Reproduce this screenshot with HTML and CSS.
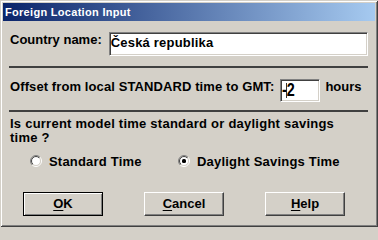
FILE: index.html
```html
<!DOCTYPE html>
<html lang="en">
<head>
<meta charset="utf-8">
<title>Foreign Location Input</title>
<link rel="stylesheet" href="styles.css">
</head>
<body>
<div class="window">
  <div class="titlebar">Foreign Location Input</div>
  <div class="content">
    <div class="row row-country">
      <span class="label">Country name:</span>
      <div class="field field-wide">Česká republika</div>
    </div>
    <div class="sep sep-1"></div>
    <div class="row row-offset">
      <span class="label label-offset">Offset from local STANDARD time to GMT:</span>
      <div class="field field-small"><span class="value">-<span class="caret"></span>2</span></div>
      <span class="unit">hours</span>
    </div>
    <div class="sep sep-2"></div>
    <p class="question">Is current model time standard or daylight savings<br>time ?</p>
    <div class="radios">
      <div class="radio">
        <svg class="radio-icon" width="12" height="12" viewBox="0 0 12 12">
          <defs>
            <linearGradient id="ro1" x1="0" y1="0" x2="1" y2="1"><stop offset="0.5" stop-color="#808080"/><stop offset="0.5" stop-color="#ffffff"/></linearGradient>
            <linearGradient id="ri1" x1="0" y1="0" x2="1" y2="1"><stop offset="0.5" stop-color="#404040"/><stop offset="0.5" stop-color="#d4d0c8"/></linearGradient>
          </defs>
          <circle cx="6" cy="6" r="5.5" fill="none" stroke="url(#ro1)" stroke-width="1"/>
          <circle cx="6" cy="6" r="4.5" fill="#fff" stroke="url(#ri1)" stroke-width="1"/>
        </svg>
        <span>Standard Time</span>
      </div>
      <div class="radio">
        <svg class="radio-icon" width="12" height="12" viewBox="0 0 12 12">
          <defs>
            <linearGradient id="ro2" x1="0" y1="0" x2="1" y2="1"><stop offset="0.5" stop-color="#808080"/><stop offset="0.5" stop-color="#ffffff"/></linearGradient>
            <linearGradient id="ri2" x1="0" y1="0" x2="1" y2="1"><stop offset="0.5" stop-color="#404040"/><stop offset="0.5" stop-color="#d4d0c8"/></linearGradient>
          </defs>
          <circle cx="6" cy="6" r="5.5" fill="none" stroke="url(#ro2)" stroke-width="1"/>
          <circle cx="6" cy="6" r="4.5" fill="#fff" stroke="url(#ri2)" stroke-width="1"/>
          <rect x="4" y="4" width="4" height="4" rx="1.5" fill="#000"/>
        </svg>
        <span>Daylight Savings Time</span>
      </div>
    </div>
    <div class="buttons">
      <button class="btn btn-default" type="button"><u>O</u>K</button>
      <button class="btn" type="button"><u>C</u>ancel</button>
      <button class="btn" type="button"><u>H</u>elp</button>
    </div>
  </div>
</div>
</body>
</html>
```

FILE: styles.css
```css
* {
  box-sizing: border-box;
}

html,
body {
  margin: 0;
  padding: 0;
  background: #d4d0c8;
}

body {
  width: 378px;
  height: 227px;
  overflow: hidden;
  font-family: "Liberation Sans", Arial, sans-serif;
  font-size: 13px;
  font-weight: bold;
  color: #000;
}

.window {
  width: 378px;
  height: 227px;
  padding: 3px;
  background: #d4d0c8;
  box-shadow:
    inset 1px 1px 0 #d4d0c8,
    inset -1px -1px 0 #404040,
    inset 2px 2px 0 #ffffff,
    inset -2px -2px 0 #808080;
  display: flex;
  flex-direction: column;
}

.titlebar {
  height: 18px;
  flex: none;
  background: linear-gradient(to right, #0a246a, #a6caf0);
  color: #fff;
  font-size: 11px;
  line-height: 18px;
  padding-left: 2px;
  letter-spacing: 0.3px;
  white-space: nowrap;
}

.content {
  flex: 1;
  padding: 0 7px 0 6px;
  display: flex;
  flex-direction: column;
}

.row {
  display: flex;
  align-items: flex-start;
  padding-left: 1px;
  line-height: 16px;
  white-space: nowrap;
}

.row-country {
  margin-top: 11px;
  gap: 7px;
}

.field {
  background: #fff;
  border: 1px solid;
  border-color: #808080 #ffffff #ffffff #808080;
  box-shadow: inset 1px 1px 0 #404040, inset -1px -1px 0 #d4d0c8;
  display: flex;
  align-items: center;
}

.field-wide {
  flex: 1;
  height: 24px;
  padding: 0 1px 3px 1px;
  letter-spacing: 0.2px;
}

.sep {
  height: 2px;
  background: #404040;
  flex: none;
}

.sep-1 {
  margin-top: 10px;
}

.row-offset {
  margin-top: 11px;
}

.label-offset {
  letter-spacing: 0.1px;
}

.field-small {
  width: 40px;
  height: 23px;
  margin-left: 6px;
  padding: 0 0 0 1px;
  font-size: 18px;
  line-height: 19px;
}

.value {
  display: inline-block;
  transform: scaleX(0.8);
  transform-origin: left center;
}

.caret {
  display: inline-block;
  width: 1px;
  height: 15px;
  margin-left: -1px;
  background: #000;
  vertical-align: -2px;
}

.unit {
  margin-left: 5px;
}

.sep-2 {
  margin-top: 8px;
}

.question {
  margin: 5px 0 0;
  padding-left: 1px;
  line-height: 14px;
  letter-spacing: 0.24px;
}

.radios {
  margin-top: 9px;
  padding-left: 21px;
  display: grid;
  grid-template-columns: 148px auto;
  line-height: 16px;
  letter-spacing: 0.2px;
}

.radio {
  display: flex;
  align-items: flex-start;
  gap: 7px;
  white-space: nowrap;
}

.radio-icon {
  flex: none;
  margin-top: 1px;
}

.buttons {
  margin-top: 22px;
  padding-left: 14px;
  display: flex;
  gap: 41px;
}

.btn {
  width: 80px;
  height: 24px;
  margin: 0;
  padding: 0;
  font: inherit;
  line-height: 16px;
  color: #000;
  background: #d4d0c8;
  border: 1px solid;
  border-color: #ffffff #404040 #404040 #ffffff;
  box-shadow: inset -1px -1px 0 #808080;
  display: flex;
  align-items: center;
  justify-content: center;
}

.btn-default {
  border-color: #000;
  box-shadow:
    inset 1px 1px 0 #ffffff,
    inset -1px -1px 0 #808080;
}

.btn u {
  text-decoration: underline;
  text-underline-offset: 2px;
}
```
